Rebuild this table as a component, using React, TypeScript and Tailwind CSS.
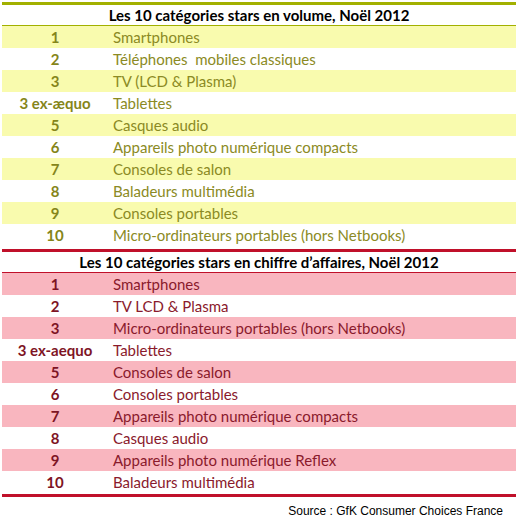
import React from "react";

const vol: [string, string][] = [
  ["1", "Smartphones"],
  ["2", "Téléphones  mobiles classiques"],
  ["3", "TV (LCD & Plasma)"],
  ["3 ex-æquo", "Tablettes"],
  ["5", "Casques audio"],
  ["6", "Appareils photo numérique compacts"],
  ["7", "Consoles de salon"],
  ["8", "Baladeurs multimédia"],
  ["9", "Consoles portables"],
  ["10", "Micro-ordinateurs portables (hors Netbooks)"],
];

const ca: [string, string][] = [
  ["1", "Smartphones"],
  ["2", "TV LCD & Plasma"],
  ["3", "Micro-ordinateurs portables (hors Netbooks)"],
  ["3 ex-aequo", "Tablettes"],
  ["5", "Consoles de salon"],
  ["6", "Consoles portables"],
  ["7", "Appareils photo numérique compacts"],
  ["8", "Casques audio"],
  ["9", "Appareils photo numérique Reflex"],
  ["10", "Baladeurs multimédia"],
];

export default function App() {
  return (
    <div className="w-[520px] h-[520px] bg-white" style={{ fontFamily: "Lato, 'Open Sans', sans-serif" }}>
      <div className="w-[514px] ml-[2px] pt-[2px]">
        <div className="h-[3px] bg-[#a2b000]" />
        <div className="h-[21px] flex items-center justify-center border-b border-[#a2b000] text-[15px] font-bold text-black">
          Les 10 catégories stars en volume, Noël 2012
        </div>
        {vol.map(([r, l], i) => (
          <div key={i} className={`h-[22px] flex items-center text-[15px] text-[#8b8a24] ${i % 2 === 0 ? "bg-[#f9fbae]" : "bg-white"}`}>
            <div className="w-[106px] text-center font-bold text-[#85851a]">{r}</div>
            <div className="pl-[5px] whitespace-pre">{l}</div>
          </div>
        ))}
        <div className="h-[3px]" />
        <div className="h-[3px] bg-[#c0102a]" />
        <div className="h-[21px] flex items-center justify-center border-b border-[#c0102a] text-[15px] font-bold text-black">
          Les 10 catégories stars en chiffre d’affaires, Noël 2012
        </div>
        {ca.map(([r, l], i) => (
          <div key={i} className={`h-[22px] flex items-center pt-[1px] text-[15px] text-[#8a1a2c] ${i % 2 === 0 ? "bg-[#f9b6bf]" : "bg-white"}`}>
            <div className="w-[106px] text-center font-bold text-[#7e1424]">{r}</div>
            <div className="pl-[5px] whitespace-pre">{l}</div>
          </div>
        ))}
        <div className="h-[1px]" />
        <div className="h-[3px] bg-[#c0102a]" />
        <div className="flex justify-end pr-[13px] pt-[5px] text-[12px] text-black" style={{ fontFamily: "'Liberation Sans', Arial, sans-serif" }}>
          Source : GfK Consumer Choices France
        </div>
      </div>
    </div>
  );
}
